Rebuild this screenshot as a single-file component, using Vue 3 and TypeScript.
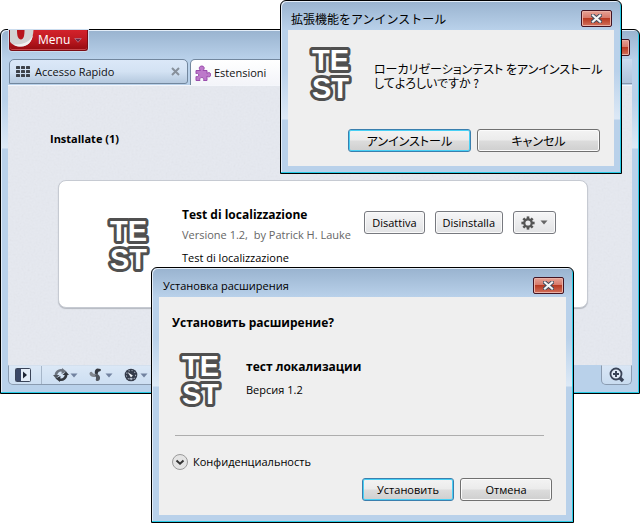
<script setup lang="ts">
import { h, ref } from 'vue'

interface Tool {
  id: string
  label: string
}

const tools: Tool[] = [
  { id: 'sync', label: 'Opera Link' },
  { id: 'unite', label: 'Opera Unite' },
  { id: 'turbo', label: 'Opera Turbo' },
]

const thumbs = [0, 1, 2, 3, 4, 5, 6, 7, 8]
const gearTeeth = [0, 45, 90, 135, 180, 225, 270, 315]
const privacyOpen = ref(false)

// White letters over a thick grey contour; paint-order keeps the fill on top.
const logoLines = [
  { text: 'TE', y: 24 },
  { text: 'ST', y: 52 },
]

const TestLogo = () =>
  h(
    'svg',
    {
      viewBox: '0 0 44 56',
      role: 'img',
      'aria-label': 'TEST',
      fill: '#fff',
      'font-family': 'Liberation Sans, Arial, sans-serif',
      'font-weight': 700,
      'font-size': 29,
      stroke: '#505050',
      'stroke-width': 6,
      'stroke-linejoin': 'round',
      'paint-order': 'stroke',
    },
    logoLines.map((line) => h('text', { x: 3, y: line.y }, line.text)),
  )
</script>

<template>
  <div class="desktop">
    <svg class="defs" aria-hidden="true">
      <filter id="paper-grain" x="0" y="0" width="100%" height="100%">
        <feTurbulence type="fractalNoise" baseFrequency=".5" numOctaves="2" seed="4" />
        <feColorMatrix type="saturate" values="0" />
      </filter>
      <symbol id="close-cross" viewBox="0 0 11 9">
        <path d="M2 1.5 L9 7.5 M9 1.5 L2 7.5" stroke="#3f4a5c" stroke-width="4" stroke-linecap="square" />
        <path d="M2 1.5 L9 7.5 M9 1.5 L2 7.5" stroke="#f4f4f4" stroke-width="2.2" stroke-linecap="square" />
      </symbol>
      <symbol id="tool-sync" viewBox="0 0 16 14">
        <path d="M3 8 A5 5 0 0 1 9.500 2.500" fill="none" stroke="#6d747f" stroke-width="2.600" />
        <path d="M9 0 L13.500 3.500 L8.500 6 Z" fill="#6d747f" />
        <path d="M0 7 L6.500 7 L3 10.500 Z" fill="#50565f" />
        <path d="M13 6 A5 5 0 0 1 6.500 11.500" fill="none" stroke="#34383f" stroke-width="2.600" />
        <path d="M7 14 L2.500 10.500 L7.500 8 Z" fill="#34383f" />
        <path d="M16 7 L9.500 7 L13 3.500 Z" fill="#34383f" />
      </symbol>
      <symbol id="tool-unite" viewBox="0 0 16 14">
        <path d="M7.500 7 C6 4 7 1 9.500 .6 L12.500 1 C13.500 2 12.500 3.500 11.200 3.500 C10 3.500 10 5 9.500 7 Z" fill="#34383f" />
        <path d="M8 8.500 C5.500 10 2 8.500 1.500 6 C1.500 3.500 4 3.300 4.500 4.800 C5 6.200 6.500 5.500 9 6 Z" fill="#81868e" />
        <path d="M8.500 6 C11.500 6.500 13 9.500 11.500 12 C10 13.800 7.200 13 7.800 11.200 C8.600 9.600 7.500 8.500 7 7.500 Z" fill="#50555d" />
      </symbol>
      <symbol id="tool-turbo" viewBox="0 0 16 14">
        <circle cx="8" cy="7" r="6.300" fill="#343b4a" />
        <circle cx="8" cy="7" r="4.600" fill="none" stroke="#aab2c0" stroke-width="1.100" stroke-dasharray="1.100 2" />
        <path d="M4.500 4 L9.800 7.500 L8 9.500 Z" fill="#f2f5f9" />
        <rect x="6.500" y="10" width="3" height="1.500" fill="#aab3c2" />
      </symbol>
    </svg>

    <main class="frame browser">
      <header class="browser-head">
        <button class="menu-button" type="button">
          <svg class="opera-mark" viewBox="0 0 24 21" aria-hidden="true">
            <path d="M0 0 H23.500 C23 10 19 16.500 11 16.500 C6 16.500 2 15 0 11.500 Z" fill="#d2d2d2" />
            <path d="M3 14.200 C5.500 16.200 8 16.500 11 16.500 C18 16.500 22 11.500 23 5 C20 12 12 15.500 3 14.200 Z" fill="#f1f1f1" />
            <path d="M7 0 H14.500 C14.500 6 13.500 9.500 11 9.500 C8 9.500 7 6 7 0 Z" fill="#b8141b" />
          </svg>
          <span>Menu</span>
          <svg class="menu-arrow" viewBox="0 0 8 5" aria-hidden="true">
            <path d="M.7 .5 H7.300 L4 4.300 Z" fill="#6a2a4a" stroke="#c08090" stroke-width=".7" />
          </svg>
        </button>
        <button class="close" type="button" aria-label="Chiudi">
          <svg viewBox="0 0 11 9" aria-hidden="true"><use href="#close-cross" /></svg>
        </button>
      </header>

      <nav class="tabs">
        <a class="tab tab-first" href="#speed-dial">
          <svg class="tab-grid" viewBox="0 0 15 12" aria-hidden="true">
            <rect
              v-for="n in thumbs"
              :key="n"
              :x="(n % 3) * 5"
              :y="Math.floor(n / 3) * 4"
              width="4"
              height="3"
              rx=".6"
              fill="#3e4249"
            />
          </svg>
          <span>Accesso Rapido</span>
          <svg class="tab-close" viewBox="0 0 9 9" aria-hidden="true">
            <path d="M1 1 L8 8 M8 1 L1 8" stroke="#87909b" stroke-width="2" />
          </svg>
        </a>
        <a class="tab tab-active" href="#extensions">
          <svg class="puzzle" viewBox="0 0 16 16" aria-hidden="true">
            <path
              d="M1 5.500 H5.500 C4.500 4.500 4 3.500 4.500 2.200 C5 .6 8.500 .6 9 2.200 C9.400 3.500 9 4.500 8 5.500 H12 V8.500 C13 7.500 14 7.300 15 8 C16 9 16 11 15 11.500 C14 12 13 12 12 11 V15.500 H8.500 C9 14.500 9 12.500 6.800 12.500 C4.500 12.500 4.500 14.500 5 15.500 H1 V11.500 C2 12 3.800 11.600 3.800 10 C3.800 8.400 2 8 1 8.700 Z"
              fill="#bd79ca"
              stroke="#9a4cac"
              stroke-width="1"
            />
          </svg>
          <span>Estensioni</span>
        </a>
        <div class="tab-rest"></div>
      </nav>

      <section class="page">
        <svg class="grain" aria-hidden="true"><rect width="100%" height="100%" filter="url(#paper-grain)" /></svg>
        <h1>Installate (1)</h1>
        <article class="card">
          <TestLogo class="logo" />
          <div class="card-text">
            <h2>Test di localizzazione</h2>
            <p class="byline">Versione 1.2, &nbsp;by Patrick H. Lauke</p>
            <p class="about">Test di localizzazione</p>
          </div>
          <div class="card-actions">
            <button class="page-button" type="button">Disattiva</button>
            <button class="page-button" type="button">Disinstalla</button>
            <button class="page-button gear-button" type="button" aria-label="Opzioni">
              <svg class="gear" viewBox="0 0 14 14" aria-hidden="true">
                <rect
                  v-for="a in gearTeeth"
                  :key="a"
                  x="5.700"
                  y=".4"
                  width="2.600"
                  height="3.200"
                  fill="#555"
                  :transform="`rotate(${a} 7 7)`"
                />
                <circle cx="7" cy="7" r="3.700" fill="none" stroke="#555" stroke-width="2.200" />
              </svg>
              <svg class="caret" viewBox="0 0 8 5" aria-hidden="true"><path d="M.5 .5 H7.500 L4 4.500 Z" fill="#666" /></svg>
            </button>
          </div>
        </article>
      </section>

      <footer class="status">
        <div class="status-tools">
          <button class="tool panel-tool" type="button" aria-label="Pannelli">
            <svg viewBox="0 0 16 14" aria-hidden="true">
              <rect x=".5" y=".5" width="15" height="13" rx="1" fill="#e4edf8" stroke="#3a4458" />
              <rect x="1" y="1" width="5" height="12" fill="#3a4766" />
              <path d="M8 3.500 L12 7 L8 10.500 Z" fill="#1f2736" />
            </svg>
          </button>
          <button v-for="tool in tools" :key="tool.id" class="tool" type="button" :aria-label="tool.label">
            <svg class="tool-icon" viewBox="0 0 16 14" aria-hidden="true"><use :href="`#tool-${tool.id}`" /></svg>
            <svg class="caret" viewBox="0 0 8 5" aria-hidden="true"><path d="M.5 .5 H7.500 L4 4.500 Z" fill="#7282a0" /></svg>
          </button>
        </div>
        <button class="zoom-tool" type="button" aria-label="Zoom">
          <svg viewBox="0 0 16 16" aria-hidden="true">
            <path d="M10.500 10.500 L14 14" stroke="#3a4458" stroke-width="3.400" />
            <circle cx="7" cy="7" r="5.500" fill="#e2ecf8" stroke="#3a4458" stroke-width="1.800" />
            <path d="M7 4 V10 M4 7 H10" stroke="#3a4458" stroke-width="2" />
          </svg>
        </button>
      </footer>
    </main>

    <section class="frame dialog uninstall" role="dialog" aria-labelledby="uninstall-title">
      <header class="dialog-head">
        <h2 id="uninstall-title">拡張機能をアンインストール</h2>
        <button class="close" type="button" aria-label="閉じる">
          <svg viewBox="0 0 11 9" aria-hidden="true"><use href="#close-cross" /></svg>
        </button>
      </header>
      <div class="client">
        <div class="message">
          <TestLogo class="logo" />
          <p>ローカリゼーションテスト をアンインストール<br />してよろしいですか ?</p>
        </div>
        <div class="dialog-actions">
          <button class="win-button default" type="button">アンインストール</button>
          <button class="win-button" type="button">キャンセル</button>
        </div>
      </div>
    </section>

    <section class="frame dialog install" role="dialog" aria-labelledby="install-title">
      <header class="dialog-head">
        <h2 id="install-title">Установка расширения</h2>
        <button class="close" type="button" aria-label="Закрыть">
          <svg viewBox="0 0 11 9" aria-hidden="true"><use href="#close-cross" /></svg>
        </button>
      </header>
      <div class="client">
        <h3>Установить расширение?</h3>
        <div class="details">
          <TestLogo class="logo" />
          <div>
            <h4>тест локализации</h4>
            <p>Версия 1.2</p>
          </div>
        </div>
        <hr />
        <button class="privacy" type="button" :aria-expanded="privacyOpen" @click="privacyOpen = !privacyOpen">
          <svg viewBox="0 0 16 16" aria-hidden="true">
            <circle cx="8" cy="8" r="7.500" fill="#e4e4e4" stroke="#9a9a9a" />
            <path d="M4.500 6.500 L8 9.700 L11.500 6.500" fill="none" stroke="#333" stroke-width="2" />
          </svg>
          <span>Конфиденциальность</span>
        </button>
        <div class="dialog-actions">
          <button class="win-button default" type="button">Установить</button>
          <button class="win-button" type="button">Отмена</button>
        </div>
      </div>
    </section>
  </div>
</template>

<style>
body {
  margin: 0;
  background: #fff;
}
</style>

<style scoped>
.desktop {
  position: relative;
  min-height: 523px;
  padding-top: 29px;
  box-sizing: border-box;
  font-family: "Open Sans", "Noto Sans", sans-serif;
  font-size: 11px;
  line-height: 16px;
  color: #000;
}
.desktop *,
.desktop *::before {
  box-sizing: border-box;
}
h1, h2, h3, h4, p {
  margin: 0;
}
button {
  font: inherit;
  color: inherit;
  margin: 0;
  padding: 0;
}
svg {
  display: block;
  flex: none;
}
.defs {
  position: absolute;
  width: 0;
  height: 0;
}
.logo {
  display: block;
  flex: none;
  width: 44px;
  height: 56px;
  overflow: visible;
}

/* Window chrome */
.frame {
  border: 1px solid #000;
  border-radius: 6px 6px 0 0;
  box-shadow: inset -1px -1px 0 #27cbe6, inset 1px 1px 0 #e3edf8;
  background: linear-gradient(180deg, #99b3cf 0, #b9d1ea 29px, #b9d1ea 70px, #dde9f6 118px, #b9d1ea 119px);
}
.close {
  display: grid;
  place-items: center;
  width: 31px;
  height: 17px;
  border: 1px solid #431422;
  border-radius: 2px;
  box-shadow: inset 0 0 0 1px #eab1a6;
  background: linear-gradient(180deg, #e6a295 0, #d7796a 46%, #b83a22 50%, #d2715c 100%);
}
.close svg {
  width: 11px;
  height: 9px;
}

/* Browser window */
.browser {
  padding: 0 7px 8px;
}
.browser-head {
  display: flex;
  justify-content: space-between;
  height: 29px;
}
.browser-head .close {
  margin: 9px 2px 0 0;
}
.menu-button {
  display: flex;
  align-items: center;
  width: 79px;
  height: 21px;
  margin-left: 1px;
  border: 1px solid #7b0d14;
  border-top: 0;
  border-radius: 0 0 3px 3px;
  background: linear-gradient(180deg, #d3222b 0, #c01a22 45%, #950b10 100%);
  box-shadow: 0 0 0 1px #cbdcee, inset 0 -1px 0 #c8474c;
  color: #fff;
  font-size: 12px;
  overflow: hidden;
}
.opera-mark {
  width: 24px;
  height: 21px;
  margin-right: 4px;
}
.menu-arrow {
  width: 8px;
  height: 5px;
  margin-left: 4px;
}
.tabs {
  display: flex;
  height: 27px;
  border-bottom: 1px solid #f4f6fb;
}
.tab {
  display: flex;
  align-items: center;
  height: 26px;
  color: #111;
  text-decoration: none;
  border: 1px solid #72879e;
  border-radius: 5px 5px 0 0;
}
.tab-first {
  width: 179px;
  height: 25px;
  margin: 0 2px 0 1px;
  padding: 0 7px 0 6px;
  gap: 4px;
  border-bottom-right-radius: 3px;
  background: linear-gradient(180deg, #dbe8f8 0, #d3e2f3 50%, #b4c8de 100%);
}
.tab-grid {
  width: 15px;
  height: 12px;
}
.tab-close {
  width: 9px;
  height: 9px;
  margin-left: auto;
}
.tab-active {
  width: 180px;
  padding: 0 4px;
  gap: 3px;
  border-bottom: 0;
  background: linear-gradient(180deg, #fff 0, #f3f4f9 100%);
}
.puzzle {
  width: 16px;
  height: 16px;
}
.tab-rest {
  flex: 1;
  height: 25px;
  border-bottom: 1px solid #8598ae;
  background: linear-gradient(180deg, #cbdcf0 0, #aec3dc 100%);
}
.page {
  position: relative;
  padding: 43px 44px 57px 50px;
  background: #e6e9f0;
}
.grain {
  position: absolute;
  inset: 0;
  width: 100%;
  height: 100%;
  opacity: .08;
}
.page h1 {
  position: relative;
  margin-left: -8px;
  height: 20px;
  font-size: 11px;
  line-height: 20px;
  font-weight: 700;
}
.card {
  position: relative;
  display: flex;
  height: 128px;
  margin-top: 31px;
  padding: 0 31px 0 48px;
  border: 1px solid #c6cad2;
  border-radius: 8px;
  background: #fff;
  box-shadow: 0 1px 1px #b4b8c0;
}
.card .logo {
  margin-top: 36px;
}
.card-text {
  flex: 1;
  margin: 24px 0 0 31px;
  white-space: nowrap;
}
.card h2 {
  font-size: 12px;
  line-height: 20px;
  font-weight: 700;
}
.byline {
  line-height: 20px;
  color: #666;
}
.about {
  margin-top: 2px;
  line-height: 22px;
}
.card-actions {
  display: flex;
  gap: 10px;
  margin-top: 30px;
}
.page-button {
  height: 23px;
  padding: 0 7px;
  border: 1px solid #77797f;
  border-radius: 3px;
  background: linear-gradient(180deg, #f6f6f7 0, #e2e3e5 100%);
  box-shadow: inset 0 0 0 1px #fafafa;
  white-space: nowrap;
}
.gear-button {
  display: flex;
  align-items: center;
  gap: 5px;
  width: 43px;
}
.gear {
  width: 14px;
  height: 14px;
}
.caret {
  width: 8px;
  height: 5px;
}
.status {
  display: flex;
  justify-content: space-between;
  height: 20px;
}
.status-tools {
  display: flex;
  align-items: center;
  width: 35%;
  padding-left: 6px;
  border: 1px solid #8a9bb0;
  border-top-color: #d4e0ee;
  border-radius: 0 0 5px 5px;
  background: linear-gradient(180deg, #dbe8f6 0, #cddff2 100%);
}
.tool {
  display: flex;
  align-items: center;
  gap: 1px;
  border: 0;
  background: none;
  margin-right: 10px;
}
.panel-tool {
  height: 18px;
  padding-right: 10px;
  margin-right: 11px;
  border-right: 1px solid #a6b6c9;
}
.tool svg:first-child {
  width: 16px;
  height: 14px;
}
.zoom-tool {
  display: grid;
  place-items: center;
  width: 31px;
  border: 1px solid #8a9bb0;
  border-top-color: #d4e0ee;
  border-radius: 0 0 5px 5px;
  background: linear-gradient(180deg, #d9e6f5 0, #c9dcf0 100%);
}
.zoom-tool svg {
  width: 16px;
  height: 16px;
}

/* Dialogs */
.dialog {
  position: absolute;
  padding: 0 7px 7px;
}
.dialog-head {
  display: flex;
  justify-content: space-between;
  height: 29px;
}
.dialog-head h2 {
  padding: 9px 0 0 4px;
  font-size: 11px;
  line-height: 18px;
  font-weight: 400;
}
.dialog-head .close {
  margin: 9px 2px 0 0;
}
.client {
  background: #efefef;
}
.dialog-actions {
  display: flex;
  justify-content: flex-end;
  gap: 6px;
  padding: 0 14px 14px;
}
.win-button {
  width: 92px;
  height: 23px;
  border: 1px solid #707070;
  border-radius: 3px;
  background: linear-gradient(180deg, #f3f3f3 0, #ebebeb 48%, #dcdcdc 52%, #cfcfcf 100%);
  box-shadow: inset 0 0 0 1px #fbfbfb;
}
.win-button.default {
  border-color: #3a7fae;
  box-shadow: inset 0 0 0 1px #48d0f5;
}
.uninstall {
  top: 0;
  left: 280px;
  width: 342px;
  font-family: "Noto Sans CJK JP", sans-serif;
}
.uninstall h2 {
  font-size: 12px;
  padding-left: 3px;
}
.uninstall .message {
  display: flex;
  gap: 21px;
  padding: 16px 0 0 21px;
  height: 99px;
}
.uninstall p {
  padding-top: 16px;
  font-size: 12px;
  line-height: 14px;
  font-feature-settings: "palt";
  white-space: nowrap;
}
.uninstall .win-button {
  width: 123px;
  font-size: 12px;
  font-feature-settings: "palt";
}
.install {
  top: 267px;
  left: 151px;
  width: 423px;
}
.install h3 {
  padding: 16px 0 0 13px;
  font-size: 12px;
  line-height: 20px;
  font-weight: 700;
}
.details {
  display: flex;
  gap: 23px;
  padding: 19px 0 27px 20px;
}
.details h4 {
  padding-top: 5px;
  font-size: 12px;
  line-height: 20px;
  font-weight: 700;
}
.details p {
  padding-top: 3px;
  line-height: 20px;
}
.install hr {
  margin: 0 22px 18px 16px;
  border: 0;
  border-top: 1px solid #adadad;
}
.privacy {
  display: flex;
  align-items: center;
  gap: 5px;
  margin: 0 0 8px 13px;
  border: 0;
  background: none;
}
.privacy svg {
  width: 16px;
  height: 16px;
}
</style>
